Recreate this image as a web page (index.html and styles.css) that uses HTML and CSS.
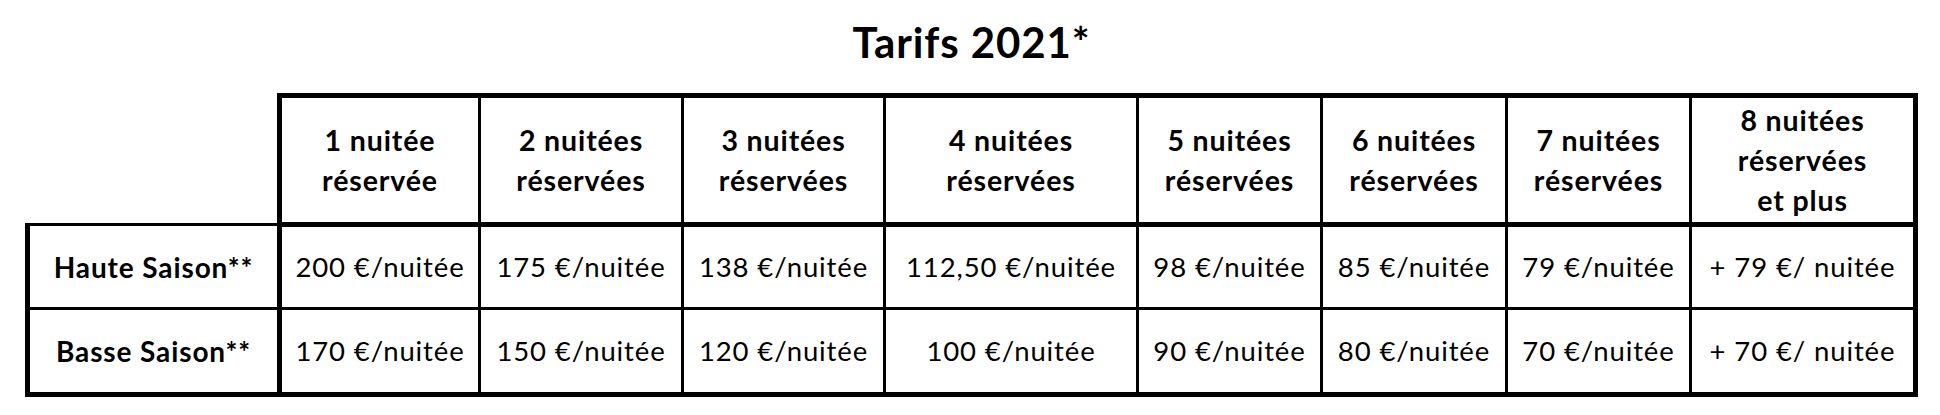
FILE: index.html
```html
<!DOCTYPE html>
<html lang="fr">
<head>
<meta charset="utf-8">
<title>Tarifs 2021</title>
<link rel="stylesheet" href="styles.css">
</head>
<body>
<main class="page">
  <h1 class="title">Tarifs 2021*</h1>
  <table class="rates">
    <colgroup>
      <col class="col-label">
      <col class="col-1">
      <col class="col-2">
      <col class="col-3">
      <col class="col-4">
      <col class="col-5">
      <col class="col-6">
      <col class="col-7">
      <col class="col-8">
    </colgroup>
    <thead>
      <tr>
        <th class="corner"></th>
        <th class="first">1 nuitée<br>réservée</th>
        <th>2 nuitées<br>réservées</th>
        <th>3 nuitées<br>réservées</th>
        <th>4 nuitées<br>réservées</th>
        <th>5 nuitées<br>réservées</th>
        <th>6 nuitées<br>réservées</th>
        <th>7 nuitées<br>réservées</th>
        <th class="last">8 nuitées<br>réservées<br>et plus</th>
      </tr>
    </thead>
    <tbody>
      <tr class="row-high">
        <th scope="row" class="season">Haute Saison**</th>
        <td>200 €/nuitée</td>
        <td>175 €/nuitée</td>
        <td>138 €/nuitée</td>
        <td>112,50 €/nuitée</td>
        <td>98 €/nuitée</td>
        <td>85 €/nuitée</td>
        <td>79 €/nuitée</td>
        <td class="last">+ 79 €/ nuitée</td>
      </tr>
      <tr class="row-low">
        <th scope="row" class="season">Basse Saison**</th>
        <td>170 €/nuitée</td>
        <td>150 €/nuitée</td>
        <td>120 €/nuitée</td>
        <td>100 €/nuitée</td>
        <td>90 €/nuitée</td>
        <td>80 €/nuitée</td>
        <td>70 €/nuitée</td>
        <td class="last">+ 70 €/ nuitée</td>
      </tr>
    </tbody>
  </table>
</main>
</body>
</html>
```

FILE: styles.css
```css
html, body {
  margin: 0;
  padding: 0;
  background: #ffffff;
}

body {
  width: 1940px;
  height: 415px;
  overflow: hidden;
  font-family: Lato, "Open Sans", "Liberation Sans", sans-serif;
  color: #000000;
  letter-spacing: 0.055em;
}

.page {
  padding: 0 22px 0 25px;
}

.title {
  box-sizing: border-box;
  height: 93px;
  margin: 0;
  padding-top: 16px;
  font-size: 42px;
  line-height: 52px;
  font-weight: 700;
  text-align: center;
}

.rates {
  border-collapse: collapse;
  table-layout: fixed;
  width: 1888px;
}

.col-label { width: 252px; }
.col-1 { width: 200px; }
.col-2 { width: 203px; }
.col-3 { width: 202px; }
.col-4 { width: 253px; }
.col-5 { width: 184px; }
.col-6 { width: 185px; }
.col-7 { width: 184px; }
.col-8 { width: 225px; }

.rates th,
.rates td {
  padding: 0;
  border: 3px solid #000000;
  text-align: center;
  vertical-align: middle;
  white-space: nowrap;
}

.rates thead th {
  height: 124px;
  border-top-width: 5px;
  border-bottom-width: 5px;
  font-size: 28.5px;
  line-height: 40px;
  font-weight: 700;
}

.rates thead th.first {
  border-left-width: 5px;
}

.rates thead th.corner {
  border: none;
}

.rates .last {
  border-right-width: 5px;
}

.rates td {
  font-size: 27.5px;
  line-height: 34px;
  font-weight: 400;
}

.rates th.season {
  border-left-width: 5px;
  border-right-width: 5px;
  font-size: 28px;
  line-height: 34px;
  font-weight: 700;
}

.row-high th,
.row-high td {
  height: 80px;
}

.row-low th,
.row-low td {
  height: 82px;
  border-bottom-width: 5px;
}
```
